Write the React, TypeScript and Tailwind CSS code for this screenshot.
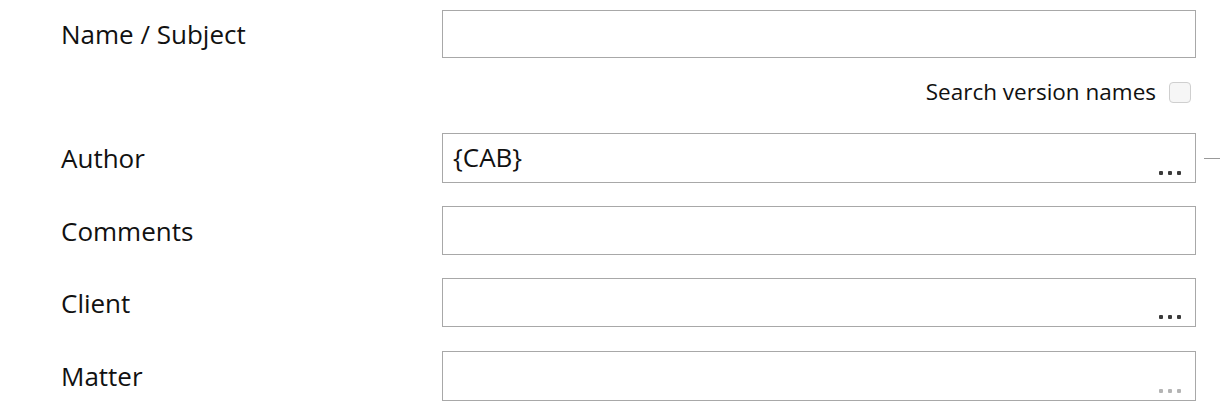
import React from 'react';

const font = { fontFamily: '"Open Sans", "Noto Sans", sans-serif' };

const Dots: React.FC<{ disabled?: boolean }> = ({ disabled }) => (
  <div className="absolute right-[14px] bottom-[7px] flex gap-[5px]">
    {[0, 1, 2].map((i) => (
      <span
        key={i}
        className={`w-[4px] h-[4px] rounded-[1px] ${disabled ? 'bg-[#b4b4b4]' : 'bg-[#3a3a3a]'}`}
      />
    ))}
  </div>
);

interface FieldRowProps {
  label: string;
  value?: string;
  lookup?: boolean;
  disabled?: boolean;
  height?: string;
  className?: string;
  dash?: boolean;
}

const FieldRow: React.FC<FieldRowProps> = ({ label, value, lookup, disabled, height = 'h-[50px]', className = '', dash }) => (
  <div className={`flex items-center ${className}`}>
    <div className="w-[442px] shrink-0 pl-[61px] text-[26px] text-[#111] leading-none">{label}</div>
    <div className={`relative w-[754px] shrink-0 ${height} border border-[#a8a8a8] bg-white`}>
      {value && (
        <div className="absolute left-[10px] top-[8px] text-[26px] leading-[30px] text-[#111]">{value}</div>
      )}
      {lookup && <Dots disabled={disabled} />}
    </div>
    {dash && <div className="ml-[8px] w-[16px] h-px bg-[#999]" />}
  </div>
);

export default function App() {
  return (
    <div className="w-[1220px] h-[414px] bg-white overflow-hidden" style={font}>
      <div className="pt-[10px]">
        <FieldRow label="Name / Subject" height="h-[48px]" />
        <div className="flex items-center justify-end mt-[24px] pr-[29px] h-[21px]">
          <span className="text-[22.5px] text-[#111] leading-none mr-[13px]">Search version names</span>
          <span className="w-[22px] h-[21px] rounded-[4px] border border-[#cfcfcf] bg-[#f6f6f6]" />
        </div>
        <FieldRow label="Author" value="{CAB}" lookup className="mt-[30px]" dash />
        <FieldRow label="Comments" className="mt-[23px]" height="h-[49px]" />
        <FieldRow label="Client" lookup className="mt-[23px]" height="h-[49px]" />
        <FieldRow label="Matter" lookup disabled className="mt-[24px]" />
      </div>
    </div>
  );
}
